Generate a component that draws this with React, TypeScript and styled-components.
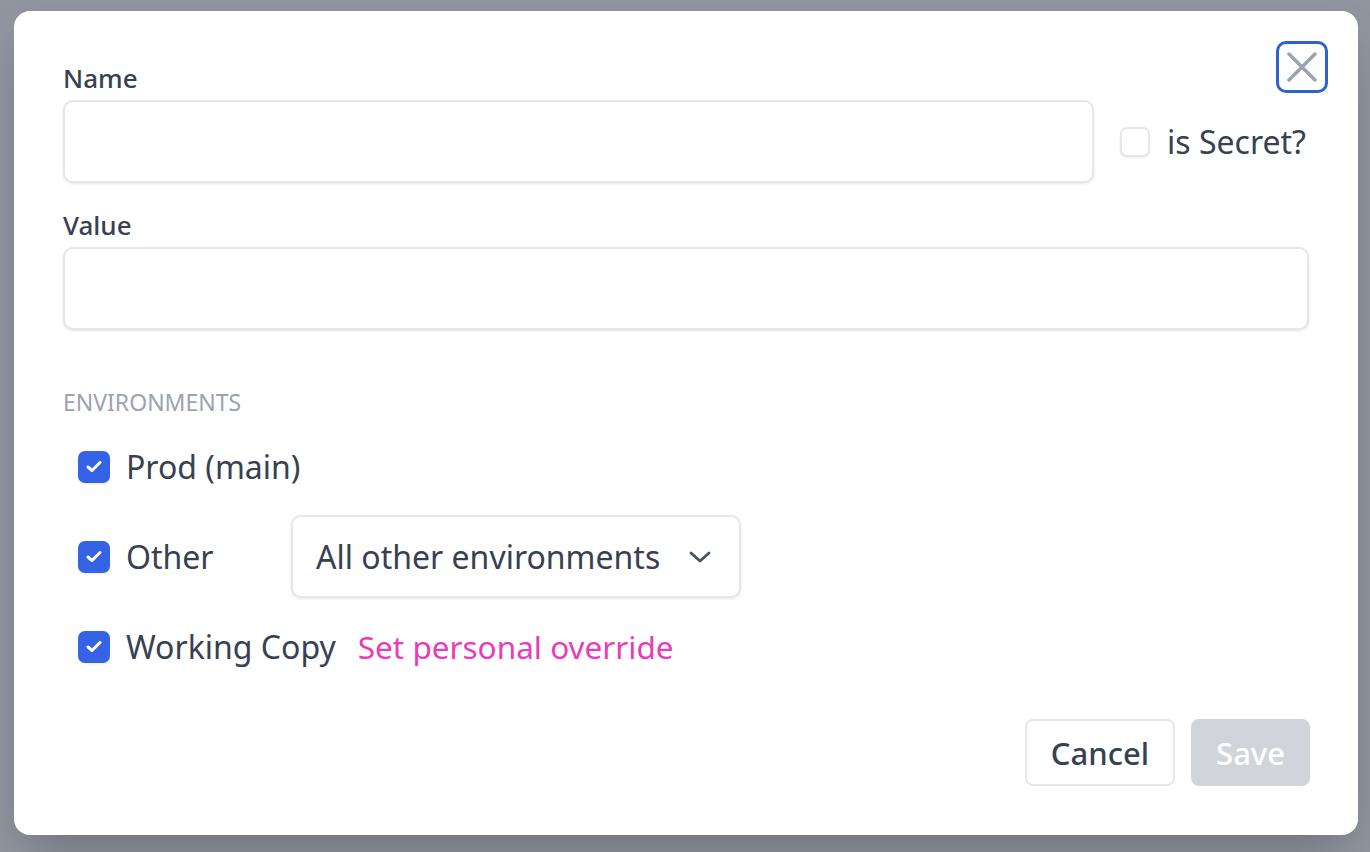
import React, { useState } from 'react';
import styled, { createGlobalStyle } from 'styled-components';

const GlobalStyle = createGlobalStyle`
  html, body {
    margin: 0;
    padding: 0;
    background: #9095a0;
  }
  body {
    font-family: 'Noto Sans', 'Open Sans', sans-serif;
    color: #374151;
  }
  * {
    box-sizing: border-box;
  }
`;

const Page = styled.div`
  width: 1370px;
  height: 852px;
  padding: 11px 0 0 14px;
  overflow: hidden;
`;

const Modal = styled.div`
  position: relative;
  width: 1344px;
  background: #ffffff;
  border-radius: 16px;
  padding: 49px 48px 49px 49px;
  box-shadow: 0 25px 50px -12px rgba(0, 0, 0, 0.25);
  display: flex;
  flex-direction: column;
`;

const CloseButton = styled.button`
  position: absolute;
  top: 30px;
  right: 30px;
  width: 52px;
  height: 52px;
  border: 3px solid #2d62cf;
  border-radius: 10px;
  background: #fff;
  padding: 0;
  display: flex;
  align-items: center;
  justify-content: center;
  cursor: pointer;
`;

const NameGrid = styled.div`
  display: grid;
  grid-template-columns: 1031px auto;
  column-gap: 26px;
  align-items: center;
`;

const Label = styled.label`
  display: block;
  font-size: 26px;
  line-height: 36px;
  font-weight: 500;
  color: #374151;
  margin-bottom: 4px;
`;

const TextInput = styled.input`
  display: block;
  width: 100%;
  height: 83px;
  border: 2px solid #e5e7eb;
  border-radius: 10px;
  box-shadow: 0 1px 3px rgba(0, 0, 0, 0.1);
  background: #fff;
  font-family: inherit;
  font-size: 32px;
  padding: 0 24px;
  color: #374151;
  outline: none;
`;

const ValueBlock = styled.div`
  margin-top: 24px;
  margin-right: 1px;
`;

const CheckLabel = styled.label<{ $gap?: number }>`
  display: flex;
  align-items: center;
  gap: ${(p) => p.$gap ?? 16}px;
  font-size: 32px;
  line-height: 44px;
  color: #374151;
  cursor: pointer;
`;

const Box = styled.span<{ $checked: boolean; $size: number }>`
  width: ${(p) => p.$size}px;
  height: ${(p) => p.$size}px;
  flex: none;
  border-radius: 7px;
  display: flex;
  align-items: center;
  justify-content: center;
  background: ${(p) => (p.$checked ? '#3563e5' : '#fff')};
  border: ${(p) => (p.$checked ? 'none' : '2px solid #e5e7eb')};
  box-shadow: 0 1px 2px rgba(0, 0, 0, 0.08);
`;

const SectionTitle = styled.div`
  margin-top: 57px;
  font-size: 23px;
  line-height: 30px;
  color: #9ca3af;
  text-transform: uppercase;
`;

const EnvList = styled.div`
  margin-top: 8px;
  padding-left: 15px;
  display: flex;
  flex-direction: column;
  gap: 7px;
`;

const EnvRow = styled.div`
  height: 83px;
  display: flex;
  align-items: center;
`;

const EnvName = styled.span<{ $width?: number }>`
  display: inline-block;
  min-width: ${(p) => (p.$width ? `${p.$width}px` : 'auto')};
`;

const Select = styled.button`
  width: 450px;
  height: 83px;
  border: 2px solid #e5e7eb;
  border-radius: 10px;
  background: #fff;
  box-shadow: 0 1px 3px rgba(0, 0, 0, 0.1);
  display: flex;
  align-items: center;
  justify-content: space-between;
  padding: 0 27px 0 23px;
  font-family: inherit;
  font-size: 32px;
  color: #374151;
  cursor: pointer;
`;

const OverrideLink = styled.a`
  margin-left: 22px;
  font-size: 31.5px;
  color: #e83db6;
  text-decoration: none;
  cursor: pointer;
`;

const Footer = styled.div`
  margin-top: 31px;
  display: flex;
  justify-content: flex-end;
  gap: 16px;
`;

const Button = styled.button<{ $variant: 'outline' | 'disabled' }>`
  height: 67px;
  padding: 0 ${(p) => (p.$variant === 'outline' ? 24 : 23)}px;
  border-radius: 8px;
  font-family: inherit;
  font-size: 31px;
  font-weight: 500;
  border: ${(p) => (p.$variant === 'outline' ? '2px solid #e5e7eb' : '2px solid #d1d5db')};
  background: ${(p) => (p.$variant === 'outline' ? '#fff' : '#d1d5db')};
  color: ${(p) => (p.$variant === 'outline' ? '#374151' : '#ffffff')};
  cursor: ${(p) => (p.$variant === 'outline' ? 'pointer' : 'default')};
`;

function CheckIcon() {
  return (
    <svg width="16" height="13" viewBox="0 0 16 13" fill="none">
      <path d="M2 7 L6 10.5 L14 2.5" stroke="#fff" strokeWidth="3" strokeLinecap="round" strokeLinejoin="round" />
    </svg>
  );
}

function Checkbox({ checked, size, onToggle }: { checked: boolean; size: number; onToggle: () => void }) {
  return (
    <Box $checked={checked} $size={size} onClick={onToggle}>
      {checked && <CheckIcon />}
    </Box>
  );
}

const envs = [
  { id: 'prod', name: 'Prod (main)' },
  { id: 'other', name: 'Other' },
  { id: 'wc', name: 'Working Copy' },
];

export default function App() {
  const [secret, setSecret] = useState(false);
  const [checked, setChecked] = useState<Record<string, boolean>>({ prod: true, other: true, wc: true });

  const toggle = (id: string) => setChecked((c) => ({ ...c, [id]: !c[id] }));

  return (
    <>
      <GlobalStyle />
      <Page>
        <Modal>
          <CloseButton aria-label="Close">
            <svg width="30" height="30" viewBox="0 0 30 30">
              <path d="M2 2 L28 28 M28 2 L2 28" stroke="#9ca3af" strokeWidth="3.5" strokeLinecap="round" />
            </svg>
          </CloseButton>

          <NameGrid>
            <Label>Name</Label>
            <span />
            <TextInput />
            <CheckLabel $gap={17}>
              <Checkbox checked={secret} size={30} onToggle={() => setSecret(!secret)} />
              is Secret?
            </CheckLabel>
          </NameGrid>

          <ValueBlock>
            <Label>Value</Label>
            <TextInput />
          </ValueBlock>

          <SectionTitle>Environments</SectionTitle>
          <EnvList>
            {envs.map((env) => (
              <EnvRow key={env.id}>
                <CheckLabel>
                  <Checkbox checked={checked[env.id]} size={32} onToggle={() => toggle(env.id)} />
                  <EnvName $width={env.id === 'other' ? 165 : undefined}>{env.name}</EnvName>
                </CheckLabel>
                {env.id === 'other' && (
                  <Select>
                    All other environments
                    <svg width="24" height="14" viewBox="0 0 24 14" fill="none">
                      <path d="M3 3 L12 11 L21 3" stroke="#4b5563" strokeWidth="3" strokeLinecap="round" strokeLinejoin="round" />
                    </svg>
                  </Select>
                )}
                {env.id === 'wc' && <OverrideLink>Set personal override</OverrideLink>}
              </EnvRow>
            ))}
          </EnvList>

          <Footer>
            <Button $variant="outline">Cancel</Button>
            <Button $variant="disabled" disabled>
              Save
            </Button>
          </Footer>
        </Modal>
      </Page>
    </>
  );
}
